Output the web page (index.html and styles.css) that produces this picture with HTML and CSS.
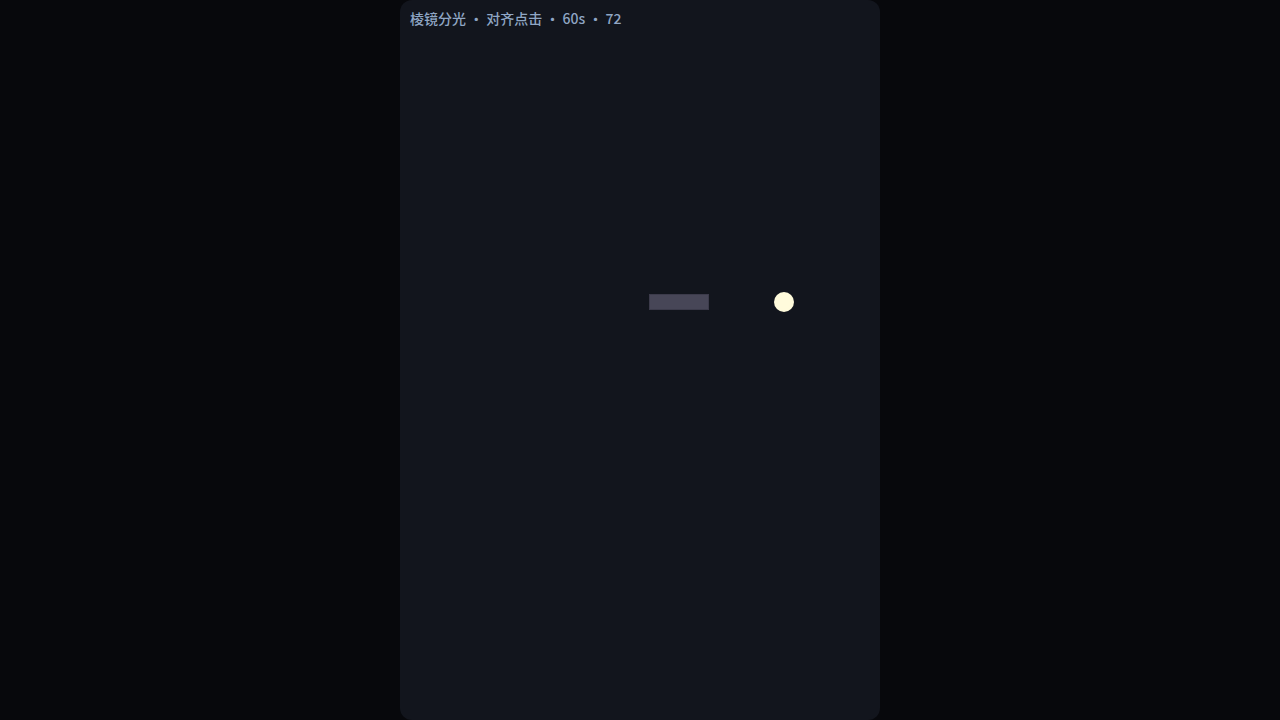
FILE: index.html
```html
<!DOCTYPE html>
<html>
  <head>
    <title>棱镜分光</title>
    <link rel="stylesheet" href="styles.css">
  </head>
  <body>
    <div class="stage">
      <div class="hud">棱镜分光 · 对齐点击 · 60s · 72</div>
      <div class="prism"></div>
      <div class="light"></div>
    </div>
  </body>
</html>
```
FILE: styles.css
```css
html, body {
  margin: 0;
  padding: 0;
  height: 100%;
  background: #07080c;
  overflow: hidden;
}
.stage {
  position: relative;
  width: 480px;
  height: 720px;
  margin: 0 auto;
  background: #12151d;
  border-radius: 12px;
}
.hud {
  padding: 8px 10px;
  font-family: "Noto Sans CJK SC", "Noto Sans", sans-serif;
  font-size: 14px;
  font-weight: 500;
  line-height: 20px;
  color: #8fa6c4;
}
.prism {
  position: absolute;
  left: 249px;
  top: 294px;
  width: 58px;
  height: 14px;
  background: #474657;
  border: 1px solid #3c3b4b;
}
.light {
  position: absolute;
  left: 374px;
  top: 292px;
  width: 20px;
  height: 20px;
  border-radius: 50%;
  background: #fffbdc;
}
```
